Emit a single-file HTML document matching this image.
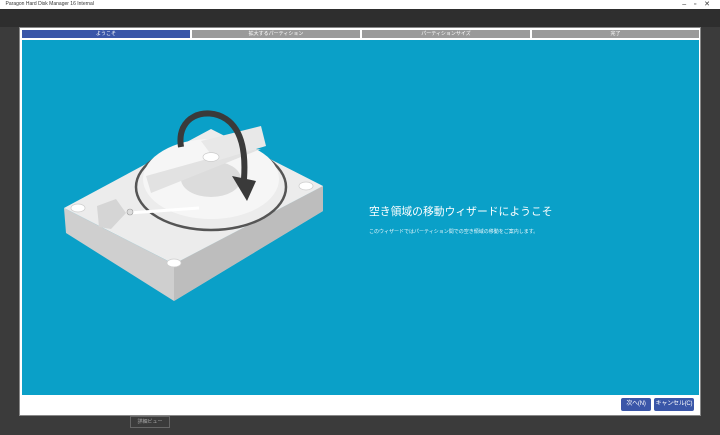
<!DOCTYPE html>
<html><head><meta charset="utf-8"><style>
body{margin:0;width:720px;height:435px;overflow:hidden;background:#3b3b3b;font-family:"Liberation Sans","Noto Sans CJK JP",sans-serif;position:relative}
.tb{position:absolute;left:0;top:0;width:720px;height:9px;background:#fff;font-size:5px;color:#333;line-height:9px}
.dlg{position:absolute;left:19px;top:27px;width:682px;height:389px;background:#fff;border:1px solid #888;box-sizing:border-box}
.tab{position:absolute;top:2px;height:8px;font-size:5px;color:#fff;text-align:center;line-height:8px;background:#9a9a9a}
.blue{position:absolute;left:2px;top:12px;width:677px;height:355px;background:#0aa0c8}
.btn{position:absolute;top:370px;height:13px;background:#3a56a8;color:#fff;font-size:6px;letter-spacing:-0.2px;line-height:13px;text-align:center;border-radius:2px;white-space:nowrap;overflow:hidden}
</style></head><body>
<div class="tb">&nbsp;&nbsp;&nbsp;&nbsp;Paragon Hard Disk Manager 16 Internal<span style="position:absolute;right:10px;font-size:7px">–&nbsp;&nbsp;&nbsp;&nbsp;▫&nbsp;&nbsp;&nbsp;&nbsp;✕</span></div>
<div style="position:absolute;left:0;top:9px;width:720px;height:18px;background:#2e2e2e"></div>
<div style="position:absolute;left:130px;top:416px;width:38px;height:10px;border:1px solid #666;font-size:5px;color:#aaa;text-align:center;line-height:10px">詳細ビュー</div>
<div class="dlg">
<div class="tab" style="left:2px;width:168px;background:#3a56a8">ようこそ</div>
<div class="tab" style="left:172px;width:168px">拡大するパーティション</div>
<div class="tab" style="left:342px;width:168px">パーティションサイズ</div>
<div class="tab" style="left:512px;width:167px">完了</div>
<div class="blue">
<svg width="677" height="355" style="position:absolute;left:0;top:0">
<g transform="translate(-21,-39)">
<polygon points="63,207 173,263 322,185 322,210 173,300 65,232" fill="#cfcfcf"/>
<polygon points="173,263 322,185 322,210 173,300" fill="#bdbdbd"/>
<polygon points="63,207 210,128 322,185 173,263" fill="#ececec"/>
<ellipse cx="210" cy="186" rx="75" ry="43" fill="none" stroke="#555" stroke-width="2.5"/>
<ellipse cx="210" cy="178" rx="68" ry="40" fill="#f6f6f6"/>
<ellipse cx="210" cy="178" rx="30" ry="18" fill="#dcdcdc"/>
<polygon points="145,175 235,150 260,148 150,192" fill="#e2e2e2"/>
<polygon points="200,140 260,125 265,145 215,160" fill="#e8e8e8"/>
<ellipse cx="210" cy="156" rx="8" ry="4.5" fill="#fff" stroke="#ccc" stroke-width="0.7"/>
<path d="M96,205 L115,198 L125,212 L110,228 L98,226 Z" fill="#d5d5d5"/>
<line x1="128" y1="212" x2="198" y2="207" stroke="#fff" stroke-width="3"/>
<circle cx="129" cy="211" r="3" fill="#ddd" stroke="#999" stroke-width="0.6"/>
<ellipse cx="77" cy="207" rx="7" ry="4" fill="#fff" stroke="#ccc" stroke-width="0.7"/>
<ellipse cx="305" cy="185" rx="7" ry="4" fill="#fff" stroke="#ccc" stroke-width="0.7"/>
<ellipse cx="173" cy="262" rx="7" ry="4" fill="#fff" stroke="#ccc" stroke-width="0.7"/>
<path d="M180,146 C175,115 205,105 225,118 C240,128 245,150 243,178" fill="none" stroke="#3a3a3a" stroke-width="6"/>
<polygon points="231,175 255,180 246,200" fill="#3a3a3a"/>
</g>
<text x="347" y="175" fill="#fff" font-size="10.8" font-family="Liberation Sans,Noto Sans CJK JP,sans-serif">空き領域の移動ウィザードにようこそ</text>
<text x="347" y="193" fill="#e8f6fb" font-size="5" font-family="Liberation Sans,Noto Sans CJK JP,sans-serif">このウィザードではパーティション間での空き領域の移動をご案内します。</text>
</svg>
</div>
<div class="btn" style="left:601px;width:30px">次へ(N)</div>
<div class="btn" style="left:634px;width:40px">キャンセル(C)</div>
</div>
</body></html>
